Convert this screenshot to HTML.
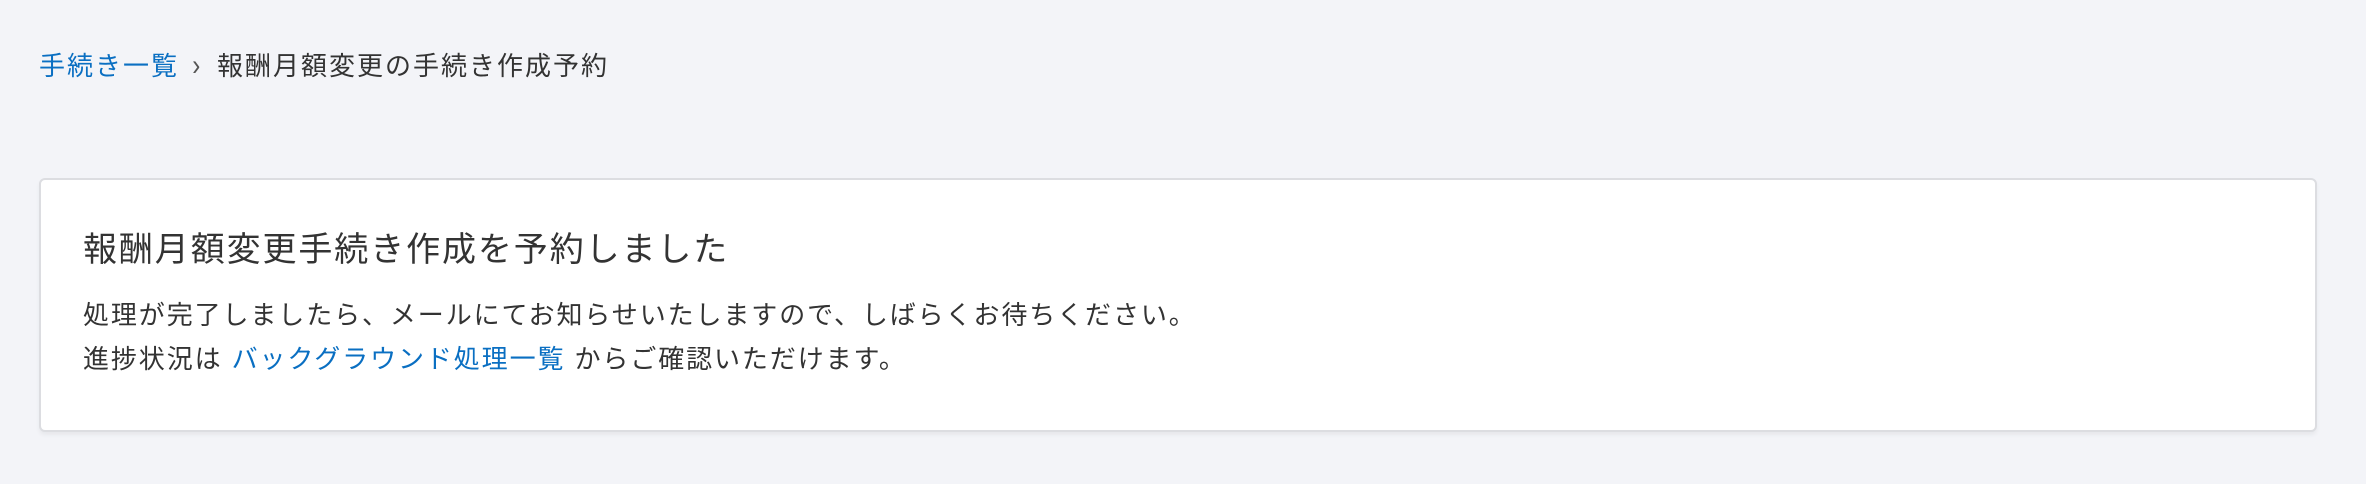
<!DOCTYPE html>
<html><head><meta charset="utf-8"><style>
html,body{margin:0;padding:0;}
body{width:2366px;height:484px;background:#f3f4f8;font-family:"Liberation Sans","Noto Sans CJK JP",sans-serif;color:#333;position:relative;overflow:hidden;}
.bc{position:absolute;left:39px;top:48px;font-size:26px;line-height:36px;letter-spacing:2px;white-space:nowrap;}
.bc a{color:#0a6fc2;text-decoration:none;}
.bc .sep{display:inline-block;margin:0 14px 0 12px;color:#555;font-size:30px;transform:scaleX(0.8);}
.card{position:absolute;left:39px;top:178px;width:2278px;height:254px;background:#fff;border:2px solid #dcdde1;border-radius:6px;box-sizing:border-box;box-shadow:0 3px 4px rgba(0,0,0,0.05);}
h1{position:absolute;left:42px;top:47px;margin:0;font-weight:normal;font-size:34px;line-height:46px;letter-spacing:1.9px;white-space:nowrap;}
p{position:absolute;left:42px;margin:0;font-size:26px;line-height:42px;letter-spacing:1.9px;white-space:nowrap;}
p a{color:#0a6fc2;text-decoration:none;}
</style></head><body>
<div class="bc"><a>手続き一覧</a><span class="sep">›</span>報酬月額変更の手続き作成予約</div>
<div class="card">
<h1>報酬月額変更手続き作成を予約しました</h1>
<p style="top:114px">処理が完了しましたら、メールにてお知らせいたしますので、しばらくお待ちください。</p>
<p style="top:158px">進捗状況は <a>バックグラウンド処理一覧</a> からご確認いただけます。</p>
</div>
</body></html>
